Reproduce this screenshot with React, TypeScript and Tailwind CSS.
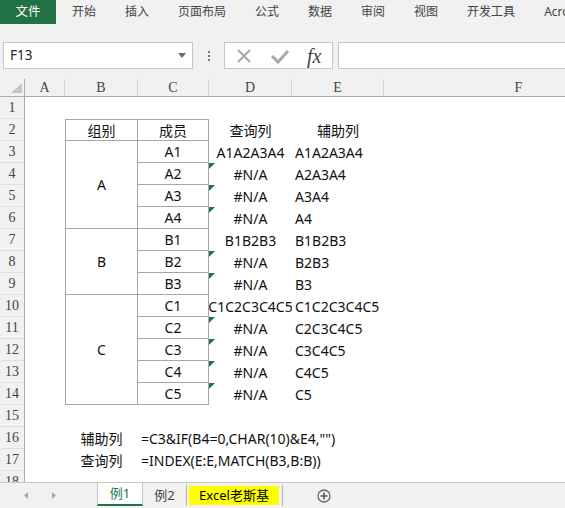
import React from "react";

type Row = { c?: string; d?: string; e?: string; tri?: boolean };

const data: Record<number, Row> = {
  3: { c: "A1", d: "A1A2A3A4", e: "A1A2A3A4" },
  4: { c: "A2", d: "#N/A", e: "A2A3A4", tri: true },
  5: { c: "A3", d: "#N/A", e: "A3A4", tri: true },
  6: { c: "A4", d: "#N/A", e: "A4", tri: true },
  7: { c: "B1", d: "B1B2B3", e: "B1B2B3" },
  8: { c: "B2", d: "#N/A", e: "B2B3", tri: true },
  9: { c: "B3", d: "#N/A", e: "B3", tri: true },
  10: { c: "C1", d: "C1C2C3C4C5", e: "C1C2C3C4C5" },
  11: { c: "C2", d: "#N/A", e: "C2C3C4C5", tri: true },
  12: { c: "C3", d: "#N/A", e: "C3C4C5", tri: true },
  13: { c: "C4", d: "#N/A", e: "C4C5", tri: true },
  14: { c: "C5", d: "#N/A", e: "C5", tri: true },
};

// merged cells in column B
const groups: Record<number, { label: string; span: string }> = {
  3: { label: "A", span: "row-span-4" },
  7: { label: "B", span: "row-span-3" },
  10: { label: "C", span: "row-span-5" },
};

const ribbonTabs = ["开始", "插入", "页面布局", "公式", "数据", "审阅", "视图", "开发工具", "Acrobat"];
const columns = ["A", "B", "C", "D", "E", "F"];
const rows = Array.from({ length: 18 }, (_, i) => i + 1);

const Triangle = () => (
  <svg className="absolute left-0 top-0" width="6" height="6" viewBox="0 0 6 6">
    <polygon points="0,0 6,0 0,6" fill="#217346" />
  </svg>
);

const SheetRow = ({ r }: { r: number }) => {
  const row = data[r];
  const inTable = r >= 2 && r <= 14;
  const group = groups[r];
  const cell = "flex items-center text-[14px] text-[#111] whitespace-nowrap";
  return (
    <>
      <div className="flex items-center justify-center border-r border-b border-r-[#ababab] border-b-[#dedede] bg-[#f1f1f1] font-['Liberation_Serif',serif] text-[14px] text-[#444]">
        {r}
      </div>
      <div />
      {/* column B */}
      {r === 2 && (
        <div className={`${cell} justify-center border-l border-t border-r border-b border-[#a6a6a6]`}>组别</div>
      )}
      {group && (
        <div className={`${cell} ${group.span} justify-center border-l border-r border-b border-[#a6a6a6]`}>
          {group.label}
        </div>
      )}
      {(r === 16 || r === 17) && (
        <div className={`${cell} justify-center`}>{r === 16 ? "辅助列" : "查询列"}</div>
      )}
      {!inTable && r !== 16 && r !== 17 && <div />}
      {/* column C */}
      {r === 2 && (
        <div className={`${cell} justify-center border-t border-r border-b border-[#a6a6a6]`}>成员</div>
      )}
      {row && (
        <div className={`${cell} justify-center border-r border-b border-[#a6a6a6]`}>{row.c}</div>
      )}
      {r === 16 && <div className={`${cell} pl-[3px]`}>=C3&amp;IF(B4=0,CHAR(10)&amp;E4,"")</div>}
      {r === 17 && <div className={`${cell} pl-[3px]`}>=INDEX(E:E,MATCH(B3,B:B))</div>}
      {!inTable && r !== 16 && r !== 17 && <div />}
      {/* column D */}
      <div className={`${cell} relative justify-center overflow-hidden`}>
        {r === 2 ? "查询列" : row?.d}
        {row?.tri && <Triangle />}
      </div>
      {/* column E */}
      {r === 2 ? (
        <div className={`${cell} justify-center`}>辅助列</div>
      ) : (
        <div className={`${cell} pl-[3px]`}>{row?.e}</div>
      )}
      <div />
    </>
  );
};

export default function App() {
  return (
    <div className="relative flex h-[508px] w-[565px] flex-col overflow-hidden bg-white [font-family:'Noto_Sans','Noto_Sans_CJK_SC',sans-serif]">
      {/* ribbon tabs */}
      <div className="flex h-[24px] shrink-0 items-center overflow-hidden bg-[#f1f1f1] text-[12px] text-[#444]">
        <div className="flex h-full w-[56px] shrink-0 items-center justify-center bg-[#217346] text-[12.5px] text-white">
          文件
        </div>
        <div className="ml-[16px] flex items-center gap-[29px]">
          {ribbonTabs.map((t) => (
            <span key={t} className="shrink-0 whitespace-nowrap">
              {t}
            </span>
          ))}
        </div>
      </div>

      {/* formula bar */}
      <div className="flex h-[55px] shrink-0 items-start bg-[#f1f1f1] pt-[18px]">
        <div className="ml-[3px] flex h-[27px] w-[190px] items-center justify-between border border-[#c6c6c6] bg-white pl-[6px] pr-[6px]">
          <span className="text-[13.5px] text-[#222]">F13</span>
          <svg width="8" height="5" viewBox="0 0 8 5">
            <polygon points="0,0 8,0 4,5" fill="#6a6a6a" />
          </svg>
        </div>
        <div className="flex h-[27px] w-[31px] flex-col items-center justify-center gap-[2px]">
          <span className="h-[2px] w-[2px] bg-[#7a7a7a]" />
          <span className="h-[2px] w-[2px] bg-[#7a7a7a]" />
          <span className="h-[2px] w-[2px] bg-[#7a7a7a]" />
        </div>
        <div className="flex h-[27px] w-[109px] items-center border border-[#c6c6c6] bg-white pl-[11px]">
          <svg width="16" height="16" viewBox="0 0 16 16">
            <path d="M2 2 L14 14 M14 2 L2 14" stroke="#a8a8a8" strokeWidth="2" />
          </svg>
          <svg className="ml-[18px]" width="20" height="16" viewBox="0 0 20 16">
            <path d="M2 8 L8 14 L18 3" stroke="#a8a8a8" strokeWidth="3" fill="none" />
          </svg>
          <span className="ml-[17px] font-['Liberation_Serif',serif] text-[20px] leading-none text-[#444] italic">
            fx
          </span>
        </div>
        <div className="ml-[5px] h-[27px] flex-1 border border-r-0 border-[#c6c6c6] bg-white" />
      </div>

      {/* sheet */}
      <div className="flex-1 overflow-hidden">
        <div className="grid grid-cols-[25px_40px_73px_71px_83px_92px_270px] grid-rows-[18px_repeat(18,22px)]">
          <div className="relative border-r border-b border-r-[#ababab] border-b-[#ababab] bg-[#f1f1f1]">
            <svg className="absolute bottom-[3px] right-[2px]" width="11" height="10" viewBox="0 0 11 10">
              <polygon points="11,0 11,10 0,10" fill="#c4c4c4" />
            </svg>
          </div>
          {columns.map((c) => (
            <div
              key={c}
              className="flex items-center justify-center border-r border-b border-r-[#d4d4d4] border-b-[#ababab] bg-[#f1f1f1] font-['Liberation_Serif',serif] text-[14px] text-[#444]"
            >
              {c}
            </div>
          ))}
          {rows.map((r) => (
            <SheetRow key={r} r={r} />
          ))}
        </div>
      </div>

      {/* sheet tabs */}
      <div className="flex h-[26px] shrink-0 items-stretch border-t border-[#c6c6c6] bg-[#f1f1f1] text-[13px]">
        <div className="flex w-[97px] items-center">
          <svg className="ml-[24px]" width="4" height="7" viewBox="0 0 4 7">
            <polygon points="4,0 4,7 0,3.5" fill="#a8a8a8" />
          </svg>
          <svg className="ml-[24px]" width="4" height="7" viewBox="0 0 4 7">
            <polygon points="0,0 0,7 4,3.5" fill="#a8a8a8" />
          </svg>
        </div>
        <div className="mb-[2px] flex w-[46px] items-center justify-center border-x border-b-2 border-x-[#c6c6c6] border-b-[#217346] bg-white text-[#217346]">
          例1
        </div>
        <div className="my-[2px] flex w-[44px] items-center justify-center border-r border-[#b4b4b4] text-[#444]">
          例2
        </div>
        <div className="my-[3px] ml-[2px] flex w-[90px] items-center justify-center bg-[#ffff00] text-black">
          Excel老斯基
        </div>
        <div className="my-[2px] ml-[3px] w-px bg-[#b4b4b4]" />
        <div className="ml-[34px] flex items-center">
          <svg width="14" height="14" viewBox="0 0 14 14">
            <circle cx="7" cy="7" r="6" stroke="#666" strokeWidth="1.3" fill="none" />
            <path d="M7 3.5 V10.5 M3.5 7 H10.5" stroke="#555" strokeWidth="1.6" />
          </svg>
        </div>
      </div>
    </div>
  );
}
